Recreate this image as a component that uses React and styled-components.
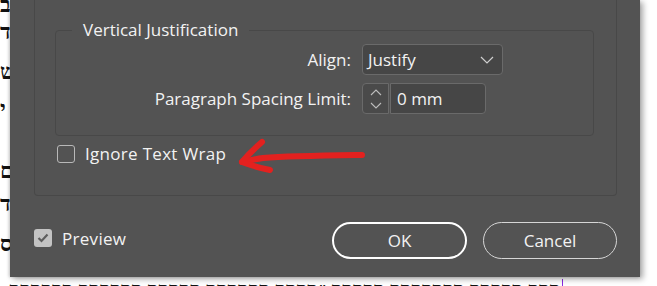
import React from 'react'
import styled, { createGlobalStyle } from 'styled-components'

const GlobalStyle = createGlobalStyle`
  html, body {
    margin: 0;
    padding: 0;
    background: #ffffff;
    overflow: hidden;
  }
`

const UI_FONT = `"Open Sans", "Noto Sans", "Liberation Sans", sans-serif`

// cut-off hebrew letters peeking out on the left of the dialog
const stripLetters = [
  { ch: 'ב', top: -6 },
  { ch: 'ד', top: 5 },
  { ch: 'ש', top: 18 },
  { ch: 'י', top: 15 },
  { ch: 'ם', top: 40 },
  { ch: 'ד', top: 11 },
  { ch: 'ס', top: 18 },
]

function App() {
  return (
    <Page>
      <GlobalStyle />
      <LeftStrip>
        {stripLetters.map((l, i) => (
          <StripLine key={i} $top={l.top}>{l.ch}</StripLine>
        ))}
      </LeftStrip>

      <Dialog>
        <OuterGroup>
          <Fieldset>
            <Legend>Vertical Justification</Legend>
            <FieldGrid>
              <Label>Align:</Label>
              <Select>
                <span>Justify</span>
                <svg width="14" height="8" viewBox="0 0 14 8">
                  <path d="M1 1 L7 7 L13 1" fill="none" stroke="#cfcfcf" strokeWidth="1.2" />
                </svg>
              </Select>

              <Label>Paragraph Spacing Limit:</Label>
              <SpinField>
                <Spinner>
                  <svg width="14" height="22" viewBox="0 0 14 22">
                    <path d="M2 7 L7 2 L12 7" fill="none" stroke="#bdbdbd" strokeWidth="1.1" />
                    <path d="M2 15 L7 20 L12 15" fill="none" stroke="#bdbdbd" strokeWidth="1.1" />
                  </svg>
                </Spinner>
                <NumberBox>0 mm</NumberBox>
              </SpinField>
            </FieldGrid>
          </Fieldset>

          <CheckRow $inset>
            <CheckBox />
            <CheckLabel>Ignore Text Wrap</CheckLabel>
          </CheckRow>
        </OuterGroup>

        <Footer>
          <CheckRow $raised>
            <CheckBox $checked>
              <svg width="12" height="10" viewBox="0 0 12 10">
                <path d="M1.5 5 L4.5 8 L10.5 1.5" fill="none" stroke="#5e5e5e" strokeWidth="2.2" />
              </svg>
            </CheckBox>
            <CheckLabel>Preview</CheckLabel>
          </CheckRow>
          <Buttons>
            <Button $primary>OK</Button>
            <Button>Cancel</Button>
          </Buttons>
        </Footer>

        <Arrow width="150" height="50" viewBox="0 0 150 50">
          <path
            d="M132 25 C 100 25.5, 60 26, 33 28 C 25 29, 18 31, 12 32"
            fill="none"
            stroke="#e3211f"
            strokeWidth="6"
            strokeLinecap="round"
          />
          <path
            d="M32 12 C 25 18, 17 26, 12 32 C 20 35, 30 38, 40 40"
            fill="none"
            stroke="#e3211f"
            strokeWidth="6"
            strokeLinecap="round"
            strokeLinejoin="round"
          />
        </Arrow>
      </Dialog>

      <BottomText>
        <HebrewRun>בבב בבבבב בבבבבבב בבבבב ״בבבב בבבבבב בבבבב בבבבבב בבבבבב בבב בבבבב</HebrewRun>
        <Caret />
      </BottomText>
    </Page>
  )
}

export default App

const Page = styled.div`
  width: 657px;
  height: 286px;
  display: grid;
  grid-template-columns: 10px 630px 1fr;
  grid-template-rows: 278px 8px;
  overflow: hidden;
  background: #ffffff;
`

const LeftStrip = styled.div`
  grid-column: 1;
  grid-row: 1;
  overflow: hidden;
  display: flex;
  flex-direction: column;
`

const StripLine = styled.div`
  height: 22px;
  margin-top: ${(p) => p.$top}px;
  font-family: "Liberation Serif", "DejaVu Serif", serif;
  font-weight: bold;
  font-size: 22px;
  line-height: 22px;
  color: #111;
  white-space: nowrap;
`

const Dialog = styled.div`
  grid-column: 2;
  grid-row: 1;
  position: relative;
  z-index: 1;
  height: 277px;
  box-sizing: border-box;
  background: #535353;
  padding: 0 23px 0 24px;
  display: flex;
  flex-direction: column;
  box-shadow: 3px 2px 6px rgba(0, 0, 0, 0.35), -1px 0 3px rgba(0, 0, 0, 0.2);
  font-family: ${UI_FONT};
  color: #f2f2f2;
`

const OuterGroup = styled.div`
  border: 1px solid #484848;
  border-top: none;
  border-radius: 0 0 4px 4px;
  padding: 0 22px 0 20px;
  height: 196px;
  box-sizing: border-box;
  display: flex;
  flex-direction: column;
`

const Fieldset = styled.fieldset`
  margin: 19px 0 0 0;
  border: 1px solid #484848;
  border-radius: 4px;
  padding: 3px 0 21px 0;
  min-width: 0;
`

const Legend = styled.legend`
  margin-left: 16px;
  padding: 0 11px;
  font-size: 17px;
  line-height: 22px;
  color: #f2f2f2;
`

const FieldGrid = styled.div`
  display: grid;
  grid-template-columns: 295px auto;
  column-gap: 11px;
  row-gap: 8px;
  align-items: center;
  justify-items: start;
`

const Label = styled.div`
  justify-self: end;
  font-size: 17px;
  white-space: nowrap;
`

const Select = styled.div`
  width: 141px;
  height: 31px;
  box-sizing: border-box;
  border: 1px solid #6a6a6a;
  border-radius: 4px;
  background: #464646;
  display: flex;
  align-items: center;
  justify-content: space-between;
  padding: 0 8px 0 5px;
  font-size: 17px;
`

const SpinField = styled.div`
  display: flex;
  gap: 1px;
  height: 31px;
`

const Spinner = styled.div`
  width: 27px;
  box-sizing: border-box;
  border: 1px solid #6a6a6a;
  border-radius: 4px 0 0 4px;
  background: #4a4a4a;
  display: flex;
  align-items: center;
  justify-content: center;
`

const NumberBox = styled.div`
  width: 96px;
  box-sizing: border-box;
  border: 1px solid #6a6a6a;
  border-radius: 0 4px 4px 0;
  background: #464646;
  display: flex;
  align-items: center;
  padding-left: 6px;
  font-size: 17px;
`

const CheckRow = styled.div`
  display: flex;
  align-items: center;
  gap: 10px;
  margin: ${(p) => (p.$inset ? '6px 0 0 2px' : p.$raised ? '-5px 0 0 0' : '0')};
`

const CheckBox = styled.div`
  width: 18px;
  height: 18px;
  box-sizing: border-box;
  border-radius: 3px;
  border: ${(p) => (p.$checked ? 'none' : '1.5px solid #b8b8b8')};
  background: ${(p) => (p.$checked ? '#c3c3c3' : 'transparent')};
  display: flex;
  align-items: center;
  justify-content: center;
`

const CheckLabel = styled.div`
  font-size: 17px;
  letter-spacing: 0.3px;
`

const Footer = styled.div`
  display: flex;
  align-items: center;
  justify-content: space-between;
  margin-top: 26px;
`

const Buttons = styled.div`
  display: flex;
  gap: 16px;
`

const Button = styled.div`
  width: ${(p) => (p.$primary ? '135px' : '134px')};
  height: 37px;
  box-sizing: border-box;
  border-radius: 19px;
  border: ${(p) => (p.$primary ? '2px solid #ffffff' : '1px solid #d6d6d6')};
  display: flex;
  align-items: center;
  justify-content: center;
  font-size: 17px;
  color: #f2f2f2;
`

const Arrow = styled.svg`
  position: absolute;
  left: 220px;
  top: 130px;
  overflow: visible;
`

const BottomText = styled.div`
  grid-column: 1 / 4;
  grid-row: 2;
  display: flex;
  align-items: flex-start;
  overflow: hidden;
  padding-left: 5px;
  margin-top: 1px;
`

const HebrewRun = styled.span`
  width: 555px;
  overflow: hidden;
  white-space: nowrap;
  direction: rtl;
  font-family: "Liberation Serif", "DejaVu Serif", serif;
  font-weight: bold;
  font-size: 22px;
  line-height: 22px;
  color: #111;
`

const Caret = styled.span`
  width: 1px;
  height: 8px;
  background: #8a2be2;
  margin-left: 2px;
`
